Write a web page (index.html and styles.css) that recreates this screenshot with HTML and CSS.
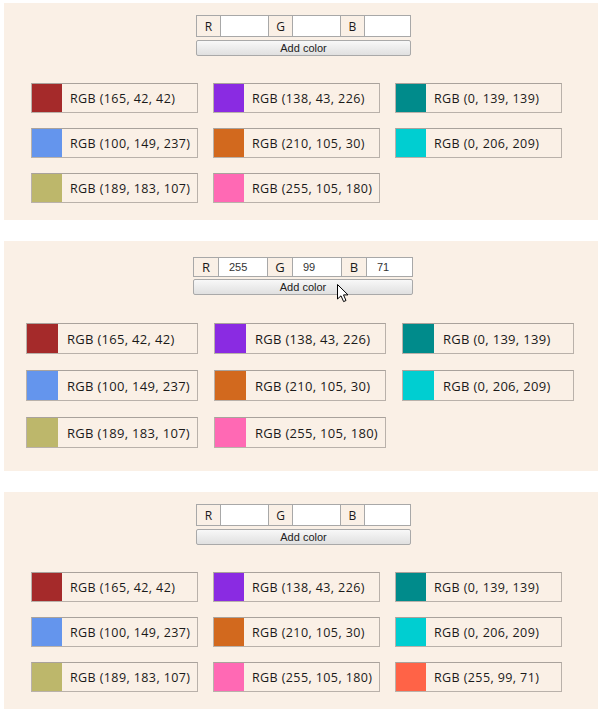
FILE: index.html
```html
<!DOCTYPE html>
<html>
<head>
<meta charset="utf-8">
<title>Colors</title>
<link rel="stylesheet" href="styles.css">
</head>
<body>
<section class="panel">
  <div class="controls">
    <div class="rgb">
      <span class="lbl">R</span><input class="field" type="text" value="">
      <span class="lbl">G</span><input class="field" type="text" value="">
      <span class="lbl">B</span><input class="field last" type="text" value="">
    </div>
    <button class="add">Add color</button>
  </div>
  <div class="cards">
    <div class="card"><span class="sw" style="background:rgb(165,42,42)"></span><span class="txt">RGB (165, 42, 42)</span></div>
    <div class="card"><span class="sw" style="background:rgb(138,43,226)"></span><span class="txt">RGB (138, 43, 226)</span></div>
    <div class="card"><span class="sw" style="background:rgb(0,139,139)"></span><span class="txt">RGB (0, 139, 139)</span></div>
    <div class="card"><span class="sw" style="background:rgb(100,149,237)"></span><span class="txt">RGB (100, 149, 237)</span></div>
    <div class="card"><span class="sw" style="background:rgb(210,105,30)"></span><span class="txt">RGB (210, 105, 30)</span></div>
    <div class="card"><span class="sw" style="background:rgb(0,206,209)"></span><span class="txt">RGB (0, 206, 209)</span></div>
    <div class="card"><span class="sw" style="background:rgb(189,183,107)"></span><span class="txt">RGB (189, 183, 107)</span></div>
    <div class="card"><span class="sw" style="background:rgb(255,105,180)"></span><span class="txt">RGB (255, 105, 180)</span></div>
  </div>
</section>

<section class="panel panel--zoom">
  <div class="controls">
    <div class="rgb">
      <span class="lbl">R</span><input class="field" type="text" value="255">
      <span class="lbl">G</span><input class="field" type="text" value="99">
      <span class="lbl">B</span><input class="field last" type="text" value="71">
    </div>
    <button class="add">Add color</button>
    <svg class="cursor" width="13" height="19" viewBox="0 0 13 19" aria-hidden="true">
      <path d="M0.5 0.5 L0.5 15 L4 11.8 L6.6 17.6 L9 16.5 L6.5 10.9 L11 10.9 Z" fill="#fff" stroke="#000" stroke-width="1" stroke-linejoin="miter"/>
    </svg>
  </div>
  <div class="cards">
    <div class="card"><span class="sw" style="background:rgb(165,42,42)"></span><span class="txt">RGB (165, 42, 42)</span></div>
    <div class="card"><span class="sw" style="background:rgb(138,43,226)"></span><span class="txt">RGB (138, 43, 226)</span></div>
    <div class="card"><span class="sw" style="background:rgb(0,139,139)"></span><span class="txt">RGB (0, 139, 139)</span></div>
    <div class="card"><span class="sw" style="background:rgb(100,149,237)"></span><span class="txt">RGB (100, 149, 237)</span></div>
    <div class="card"><span class="sw" style="background:rgb(210,105,30)"></span><span class="txt">RGB (210, 105, 30)</span></div>
    <div class="card"><span class="sw" style="background:rgb(0,206,209)"></span><span class="txt">RGB (0, 206, 209)</span></div>
    <div class="card"><span class="sw" style="background:rgb(189,183,107)"></span><span class="txt">RGB (189, 183, 107)</span></div>
    <div class="card"><span class="sw" style="background:rgb(255,105,180)"></span><span class="txt">RGB (255, 105, 180)</span></div>
  </div>
</section>

<section class="panel">
  <div class="controls">
    <div class="rgb">
      <span class="lbl">R</span><input class="field" type="text" value="">
      <span class="lbl">G</span><input class="field" type="text" value="">
      <span class="lbl">B</span><input class="field last" type="text" value="">
    </div>
    <button class="add">Add color</button>
  </div>
  <div class="cards">
    <div class="card"><span class="sw" style="background:rgb(165,42,42)"></span><span class="txt">RGB (165, 42, 42)</span></div>
    <div class="card"><span class="sw" style="background:rgb(138,43,226)"></span><span class="txt">RGB (138, 43, 226)</span></div>
    <div class="card"><span class="sw" style="background:rgb(0,139,139)"></span><span class="txt">RGB (0, 139, 139)</span></div>
    <div class="card"><span class="sw" style="background:rgb(100,149,237)"></span><span class="txt">RGB (100, 149, 237)</span></div>
    <div class="card"><span class="sw" style="background:rgb(210,105,30)"></span><span class="txt">RGB (210, 105, 30)</span></div>
    <div class="card"><span class="sw" style="background:rgb(0,206,209)"></span><span class="txt">RGB (0, 206, 209)</span></div>
    <div class="card"><span class="sw" style="background:rgb(189,183,107)"></span><span class="txt">RGB (189, 183, 107)</span></div>
    <div class="card"><span class="sw" style="background:rgb(255,105,180)"></span><span class="txt">RGB (255, 105, 180)</span></div>
    <div class="card"><span class="sw" style="background:rgb(255,99,71)"></span><span class="txt">RGB (255, 99, 71)</span></div>
  </div>
</section>
</body>
</html>
```

FILE: styles.css
```css
html, body {
  margin: 0;
  padding: 0;
  background: #ffffff;
}

body {
  padding: 3px 0 0 4px;
  display: flex;
  flex-direction: column;
  gap: 21px;
  font-family: "Open Sans", "DejaVu Sans", sans-serif;
  color: #1a1a1a;
}

.panel {
  width: 594px;
  box-sizing: border-box;
  background: #faf0e6;
  padding: 12px 0 17px 27px;
}

.controls {
  position: relative;
  width: 215px;
  margin-left: 165px;
  display: flex;
  flex-direction: column;
  gap: 3px;
}

.rgb {
  display: flex;
  height: 22px;
  box-sizing: border-box;
  border: 1px solid #a8a8a8;
}

.lbl {
  width: 24px;
  flex: none;
  box-sizing: border-box;
  border-right: 1px solid #a8a8a8;
  background: #faf0e6;
  display: flex;
  align-items: center;
  justify-content: center;
  font-size: 12px;
  color: #1a1a1a;
}

.field {
  width: 48px;
  flex: none;
  box-sizing: border-box;
  border: none;
  border-right: 1px solid #a8a8a8;
  background: #ffffff;
  margin: 0;
  padding: 0 0 0 10px;
  font-family: "Liberation Sans", Arial, sans-serif;
  font-size: 11px;
  color: #333;
  outline: none;
}

.field.last {
  flex: 1;
  width: auto;
  min-width: 0;
  border-right: none;
}

.add {
  height: 16px;
  margin: 0;
  padding: 0;
  box-sizing: border-box;
  border: 1px solid #a9a9a9;
  border-radius: 2px;
  background: linear-gradient(#f8f8f8, #e0e0e0);
  font-family: "Liberation Sans", Arial, sans-serif;
  font-size: 11px;
  line-height: 14px;
  color: #222;
}

.cards {
  margin-top: 27px;
  display: grid;
  grid-template-columns: repeat(3, 167px);
  column-gap: 15px;
  row-gap: 15px;
}

.card {
  height: 30px;
  box-sizing: border-box;
  border: 1px solid #b9b1aa;
  border-top-color: #a9a29c;
  background: #faf0e6;
  display: flex;
  align-items: center;
}

.sw {
  width: 30px;
  height: 100%;
  flex: none;
}

.txt {
  padding-left: 8px;
  font-size: 12.5px;
  letter-spacing: 0.4px;
  white-space: nowrap;
}

/* second panel is captured at a slightly larger zoom */
.panel--zoom {
  padding: 16px 0 23px 22px;
}

.panel--zoom .controls {
  width: 220px;
  margin-left: 167px;
  gap: 2px;
}

.panel--zoom .rgb {
  height: 20px;
}

.panel--zoom .lbl {
  width: 25px;
  font-size: 13px;
}

.panel--zoom .field {
  width: 49px;
}

.panel--zoom .cards {
  margin-top: 28px;
  grid-template-columns: repeat(3, 172px);
  column-gap: 16px;
  row-gap: 16px;
}

.panel--zoom .card {
  height: 31px;
}

.panel--zoom .sw {
  width: 31px;
}

.panel--zoom .txt {
  padding-left: 9px;
  font-size: 13px;
  letter-spacing: 0.3px;
}

.cursor {
  position: absolute;
  left: 144px;
  top: 27px;
}
```
